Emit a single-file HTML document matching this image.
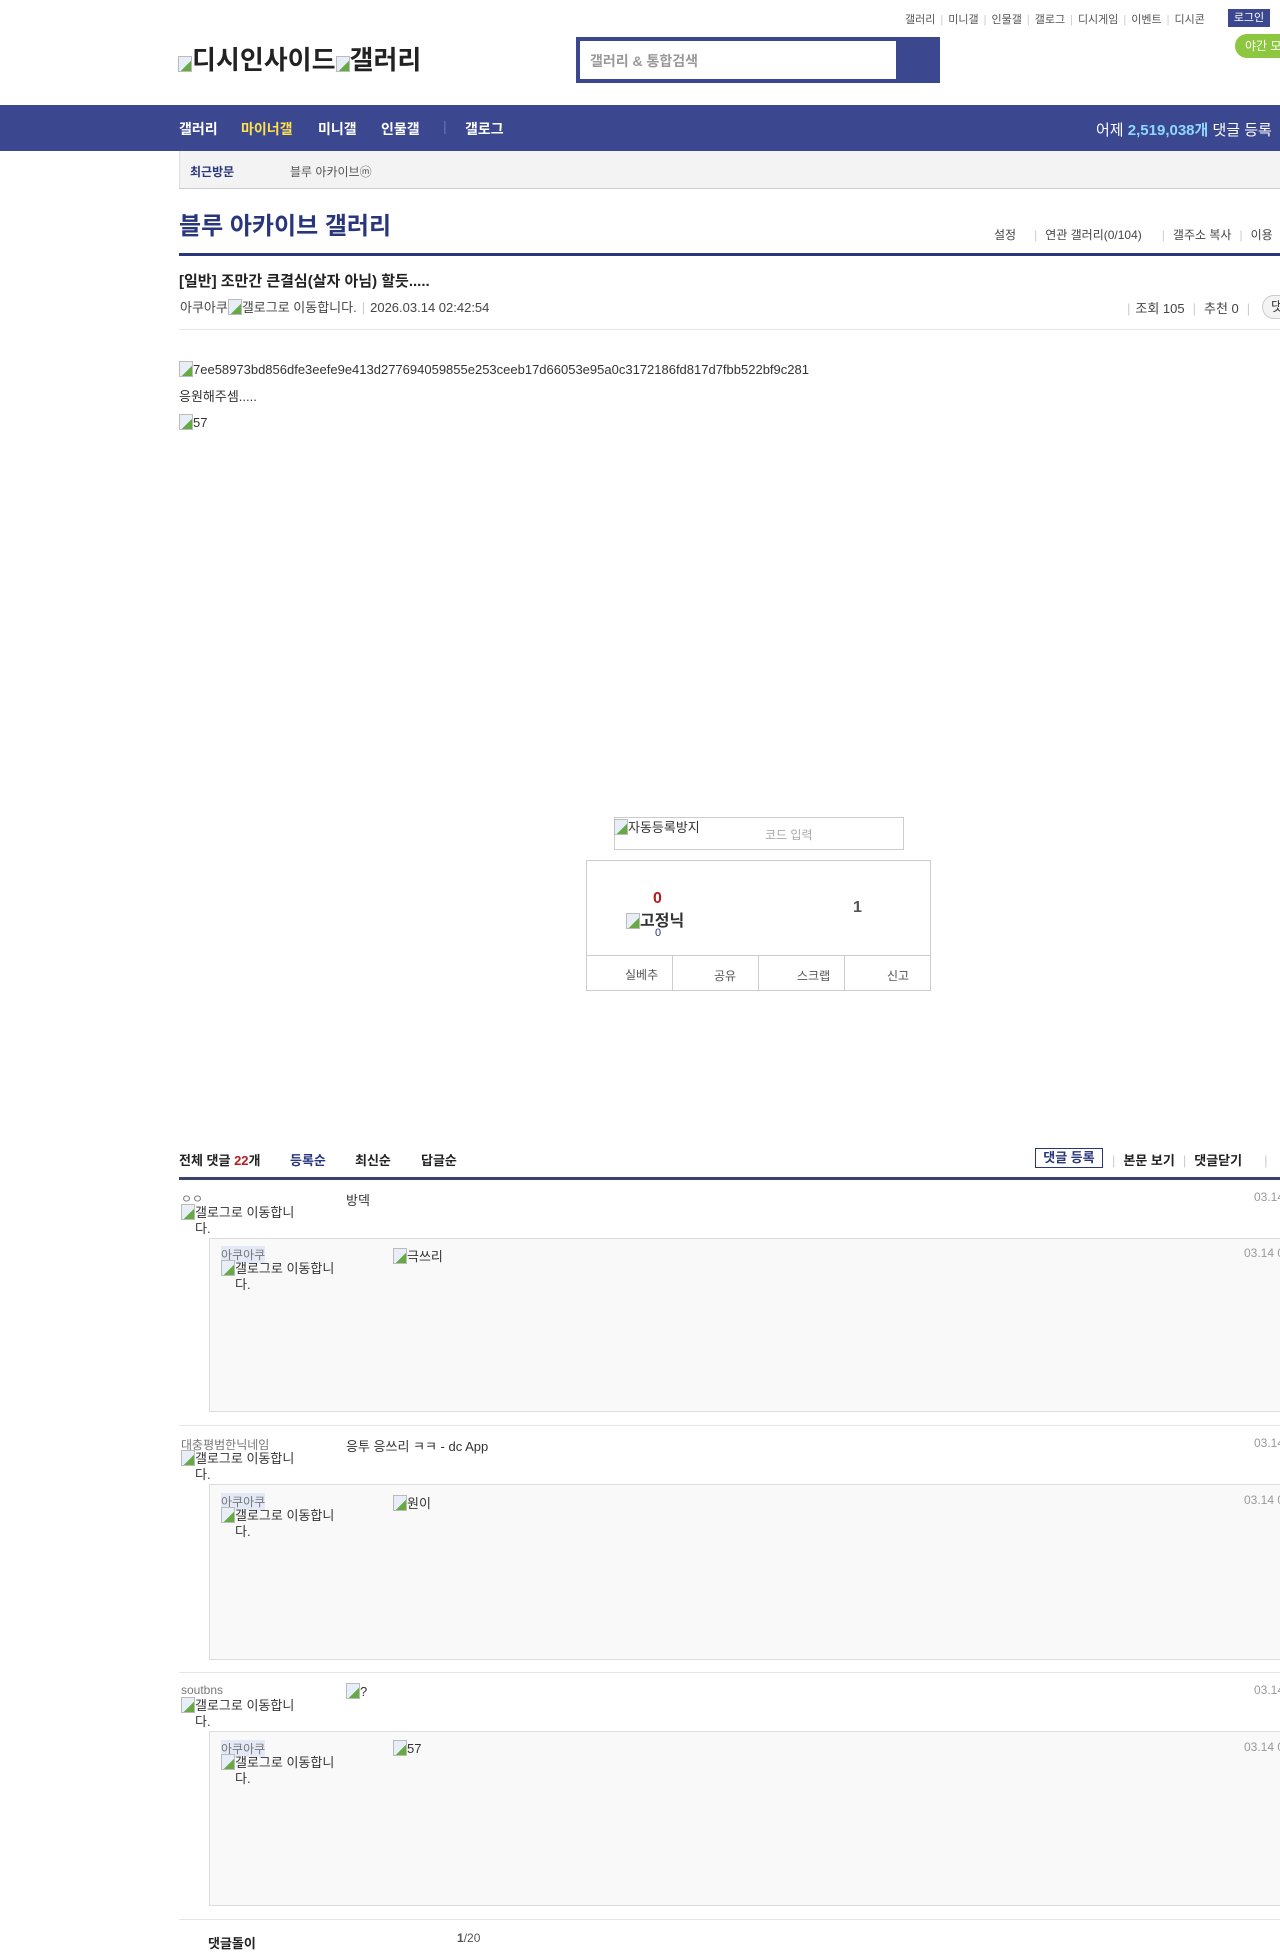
<!DOCTYPE html>
<html><head><meta charset="utf-8">
<style>
*{margin:0;padding:0;box-sizing:border-box}
body{width:1280px;height:1958px;position:relative;background:#fff;font-family:"Liberation Sans","Noto Sans CJK KR",sans-serif;color:#333;overflow:hidden;font-size:13px}
.a{position:absolute;white-space:nowrap}
.bi{display:inline-block;width:14px;height:16px;border:1px solid #bbb;background:linear-gradient(135deg,#e8eef8 60%,#6a4 60%);vertical-align:-3px}
.sep{color:#ccc;margin:0 5px}
.top{font-size:11px;color:#555}
.nav{position:absolute;left:0;top:105px;width:1280px;height:46px;background:#3b4890}
.nav span{position:absolute;top:14px;color:#fff;font-weight:bold;font-size:14px}
.cm{font-size:13px;color:#333}
.nick{font-size:12px;color:#777}
.gl{font-size:13px;color:#333;line-height:16px;white-space:normal;width:124px;padding-left:14px;text-indent:-14px}
.rbox{position:absolute;left:209px;width:1071px;background:#f9f9f9;border:1px solid #ddd;border-right:none}
.hr{position:absolute;left:179px;width:1101px;height:1px;background:#e5e5e5}
.date{font-size:12px;color:#999}
</style></head><body>

<div class="a top" style="left:905px;top:11px">갤러리<span class="sep">|</span>미니갤<span class="sep">|</span>인물갤<span class="sep">|</span>갤로그<span class="sep">|</span>디시게임<span class="sep">|</span>이벤트<span class="sep">|</span>디시콘</div>
<div class="a" style="left:1228px;top:9px;width:42px;height:18px;background:#3b4890;color:#fff;font-size:11px;text-align:center;line-height:18px">로그인</div>
<div class="a" style="left:1235px;top:34px;width:60px;height:24px;background:#8dc63f;border-radius:12px;color:#fff;font-size:12px;line-height:24px;padding-left:10px">야간 모드</div>

<div class="a" style="left:178px;top:40px;font-size:26px;font-weight:bold;color:#222"><span class="bi"></span>디시인사이드<span class="bi"></span>갤러리</div>

<div class="a" style="left:576px;top:37px;width:364px;height:46px;background:#3b4890"></div>
<div class="a" style="left:580px;top:41px;width:316px;height:38px;background:#fff"></div>
<div class="a" style="left:590px;top:51px;font-size:14px;color:#999;font-weight:bold">갤러리 &amp; 통합검색</div>

<div class="nav">
<span style="left:179px">갤러리</span>
<span style="left:241px;color:#ffe14a">마이너갤</span>
<span style="left:318px">미니갤</span>
<span style="left:381px">인물갤</span>
<span style="left:443px;top:13px;color:#6a76b0;font-weight:normal">|</span>
<span style="left:465px">갤로그</span>
<span style="left:1096px;font-weight:normal;font-size:15px">어제 <b style="color:#8fd7ff">2,519,038개</b> 댓글 등록</span>
</div>

<div class="a" style="left:179px;top:151px;width:1101px;height:38px;background:#f3f3f3;border-bottom:1px solid #ccc;border-left:1px solid #ddd"></div>
<div class="a" style="left:190px;top:163px;font-size:12px;font-weight:bold;color:#29367c">최근방문</div>
<div class="a" style="left:290px;top:163px;font-size:12px;color:#555">블루 아카이브ⓜ</div>

<div class="a" style="left:179px;top:206px;font-size:24px;font-weight:bold;color:#29367c">블루 아카이브 갤러리</div>
<div class="a" style="left:994px;top:226px;font-size:12px;color:#444">설정<span class="sep" style="margin:0 8px 0 18px">|</span>연관 갤러리(0/104)<span class="sep" style="margin:0 8px 0 20px">|</span>갤주소 복사<span class="sep" style="margin:0 8px">|</span>이용</div>
<div class="a" style="left:179px;top:253px;width:1101px;height:3px;background:#29367c"></div>

<div class="a" style="left:179px;top:270px;font-size:15px;font-weight:bold;color:#222">[일반] 조만간 큰결심(살자 아님) 할듯.....</div>
<div class="a" style="left:180px;top:297px;font-size:13px;color:#444">아쿠아쿠<span class="bi"></span>갤로그로 이동합니다.<span class="sep">|</span>2026.03.14 02:42:54</div>
<div class="a" style="left:1122px;top:298px;font-size:13px;color:#444"><span class="sep">|</span>조회 105<span class="sep" style="margin:0 8px">|</span>추천 0<span class="sep" style="margin:0 8px">|</span></div>
<div class="a" style="left:1262px;top:295px;width:40px;height:24px;border:1px solid #ccc;border-radius:12px;background:#f3f3f3;font-size:13px;padding-left:8px;line-height:22px">댓</div>
<div class="a" style="left:179px;top:329px;width:1101px;height:1px;background:#e5e5e5"></div>

<div class="a" style="left:179px;top:361px;font-size:13px;color:#333"><span class="bi"></span>7ee58973bd856dfe3eefe9e413d277694059855e253ceeb17d66053e95a0c3172186fd817d7fbb522bf9c281</div>
<div class="a" style="left:179px;top:386px;font-size:13px">응원해주셈.....</div>
<div class="a" style="left:179px;top:414px;font-size:13px"><span class="bi"></span>57</div>

<div class="a" style="left:614px;top:817px;width:290px;height:33px;border:1px solid #ccc"></div>
<div class="a" style="left:614px;top:817px;font-size:13px"><span class="bi"></span>자동등록방지</div>
<div class="a" style="left:765px;top:826px;font-size:12px;color:#aaa">코드 입력</div>

<div class="a" style="left:586px;top:860px;width:345px;height:131px;border:1px solid #ccc"></div>
<div class="a" style="left:586px;top:955px;width:345px;height:1px;background:#ccc"></div>
<div class="a" style="left:672px;top:955px;width:1px;height:36px;background:#ccc"></div>
<div class="a" style="left:758px;top:955px;width:1px;height:36px;background:#ccc"></div>
<div class="a" style="left:844px;top:955px;width:1px;height:36px;background:#ccc"></div>
<div class="a" style="left:653px;top:890px;font-size:16px;font-weight:bold;color:#b71c1c">0</div>
<div class="a" style="left:626px;top:907px;font-size:16px;font-weight:bold;color:#333"><span class="bi"></span>고정닉</div>
<div class="a" style="left:655px;top:927px;font-size:11px;color:#29367c">0</div>
<div class="a" style="left:853px;top:899px;font-size:16px;font-weight:bold;color:#555">1</div>
<div class="a" style="left:625px;top:966px;font-size:12px;color:#555">실베추</div>
<div class="a" style="left:714px;top:967px;font-size:12px;color:#555">공유</div>
<div class="a" style="left:797px;top:967px;font-size:12px;color:#555">스크랩</div>
<div class="a" style="left:887px;top:967px;font-size:12px;color:#555">신고</div>

<div class="a" style="left:179px;top:1150px;font-size:13px;font-weight:bold;color:#222">전체 댓글 <span style="color:#b71c1c">22</span>개</div>
<div class="a" style="left:290px;top:1150px;font-size:13px;font-weight:bold;color:#29367c">등록순</div>
<div class="a" style="left:355px;top:1150px;font-size:13px;font-weight:bold;color:#222">최신순</div>
<div class="a" style="left:421px;top:1150px;font-size:13px;font-weight:bold;color:#222">답글순</div>
<div class="a" style="left:1035px;top:1148px;width:68px;height:20px;border:1px solid #29367c;font-size:13px;font-weight:bold;color:#29367c;text-align:center;line-height:18px">댓글 등록</div>
<div class="a" style="left:1108px;top:1150px;font-size:13px;font-weight:bold;color:#222"><span class="sep" style="font-weight:normal;margin:0 8px 0 4px">|</span>본문 보기<span class="sep" style="font-weight:normal;margin:0 8px">|</span>댓글닫기<span class="sep" style="font-weight:normal;margin-left:22px">|</span></div>
<div class="a" style="left:179px;top:1177px;width:1101px;height:3px;background:#3b4268"></div>

<!-- comment 1 -->
<div class="a nick" style="left:181px;top:1190px">ㅇㅇ</div>
<div class="a gl" style="left:181px;top:1204px"><span class="bi"></span>갤로그로 이동합니다.</div>
<div class="a cm" style="left:346px;top:1190px">방덱</div>
<div class="a date" style="left:1254px;top:1190px">03.14</div>
<div class="rbox" style="top:1238px;height:174px"></div>
<div class="a nick" style="left:221px;top:1246px;background:#e4e9f7">아쿠아쿠</div>
<div class="a gl" style="left:221px;top:1260px"><span class="bi"></span>갤로그로 이동합니다.</div>
<div class="a cm" style="left:393px;top:1246px"><span class="bi"></span>극쓰리</div>
<div class="a date" style="left:1244px;top:1246px">03.14 0</div>
<div class="hr" style="top:1425px"></div>

<!-- comment 2 -->
<div class="a nick" style="left:181px;top:1436px">대충평범한닉네임</div>
<div class="a gl" style="left:181px;top:1450px"><span class="bi"></span>갤로그로 이동합니다.</div>
<div class="a cm" style="left:346px;top:1436px">응투 응쓰리 ㅋㅋ - dc App</div>
<div class="a date" style="left:1254px;top:1436px">03.14</div>
<div class="rbox" style="top:1484px;height:176px"></div>
<div class="a nick" style="left:221px;top:1493px;background:#e4e9f7">아쿠아쿠</div>
<div class="a gl" style="left:221px;top:1507px"><span class="bi"></span>갤로그로 이동합니다.</div>
<div class="a cm" style="left:393px;top:1493px"><span class="bi"></span>원이</div>
<div class="a date" style="left:1244px;top:1493px">03.14 0</div>
<div class="hr" style="top:1672px"></div>

<!-- comment 3 -->
<div class="a nick" style="left:181px;top:1683px">soutbns</div>
<div class="a gl" style="left:181px;top:1697px"><span class="bi"></span>갤로그로 이동합니다.</div>
<div class="a cm" style="left:346px;top:1683px"><span class="bi"></span>?</div>
<div class="a date" style="left:1254px;top:1683px">03.14</div>
<div class="rbox" style="top:1731px;height:175px"></div>
<div class="a nick" style="left:221px;top:1740px;background:#e4e9f7">아쿠아쿠</div>
<div class="a gl" style="left:221px;top:1754px"><span class="bi"></span>갤로그로 이동합니다.</div>
<div class="a cm" style="left:393px;top:1740px"><span class="bi"></span>57</div>
<div class="a date" style="left:1244px;top:1740px">03.14 0</div>
<div class="hr" style="top:1919px"></div>

<div class="a" style="left:208px;top:1933px;font-size:13px;font-weight:bold;color:#222">댓글돌이</div>
<div class="a" style="left:457px;top:1931px;font-size:12px;color:#555"><b>1</b>/20</div>

</body></html>
